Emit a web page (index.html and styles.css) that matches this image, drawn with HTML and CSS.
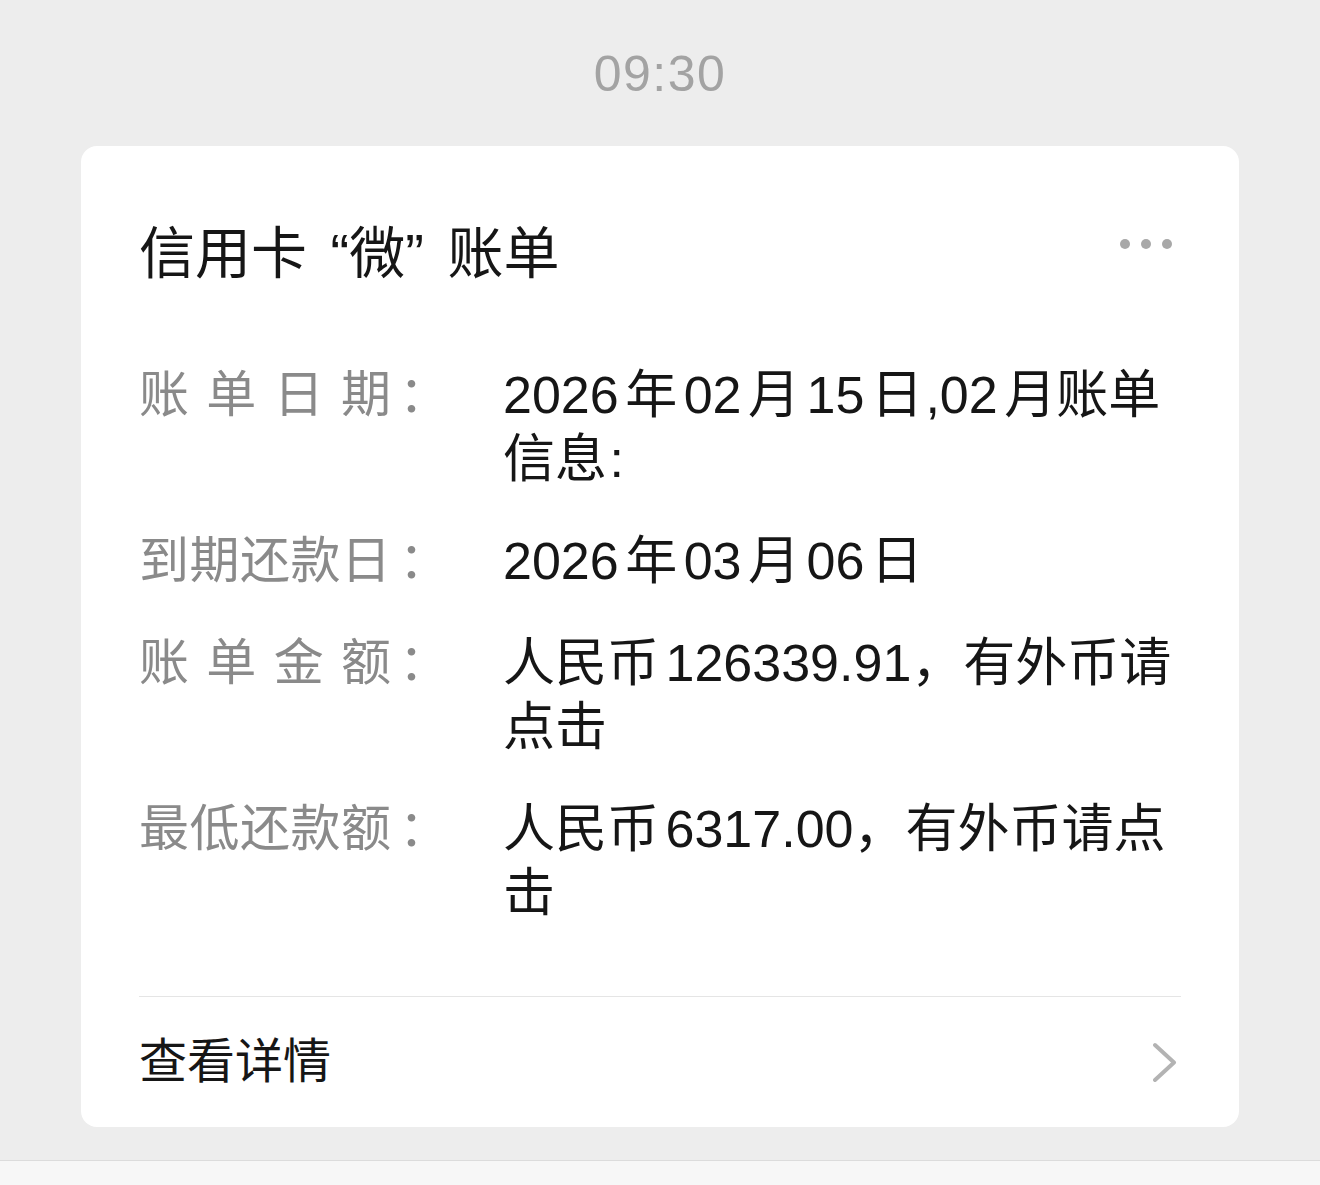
FILE: index.html
```html
<!DOCTYPE html>
<html lang="zh-CN">
<head>
<meta charset="utf-8">
<title>信用卡“微”账单</title>
<link rel="stylesheet" href="styles.css">
</head>
<body>
<div class="time">09:30</div>
<div class="card">
  <div class="head">
    <div class="title">信用卡 “微” 账单</div>
    <div class="more"><i></i><i></i><i></i></div>
  </div>
  <div class="rows">
    <div class="row">
      <div class="label"><span class="lt">账单日期</span><span class="colon">：</span></div>
      <div class="val">2026年02月15<span class="tk">日</span>,02月账单<br>信<span class="tk">息</span>:</div>
    </div>
    <div class="row">
      <div class="label"><span class="lt">到期还款日</span><span class="colon">：</span></div>
      <div class="val">2026年03月06日</div>
    </div>
    <div class="row">
      <div class="label"><span class="lt">账单金额</span><span class="colon">：</span></div>
      <div class="val">人民币126339.91，有外币请<br>点击</div>
    </div>
    <div class="row">
      <div class="label"><span class="lt">最低还款额</span><span class="colon">：</span></div>
      <div class="val">人民币6317.00，有外币请点<br>击</div>
    </div>
  </div>
  <div class="foot">
    <span class="detail">查看详情</span>
    <svg class="chev" width="24" height="40" viewBox="0 0 24 40"><polyline points="2,3 21,20.5 2,38" fill="none" stroke="#b3b3b3" stroke-width="4" stroke-linecap="round" stroke-linejoin="round"/></svg>
  </div>
</div>
<div class="bottombar"></div>
</body>
</html>
```

FILE: styles.css
```css
html, body {
  margin: 0;
  padding: 0;
  overflow: hidden;
}
body {
  background: #ededed;
  font-family: "Liberation Sans", "Noto Sans CJK SC", sans-serif;
  color: #1a1a1a;
  height: 1185px;
}
.time {
  padding-top: 44px;
  height: 60px;
  line-height: 60px;
  text-align: center;
  font-size: 50px;
  letter-spacing: 1.5px;
  color: #a3a3a3;
}
.card {
  margin: 42px 81px 33px 81px;
  background: #fff;
  border-radius: 16px;
  padding: 0 58px 0 58px;
}
.head {
  display: flex;
  justify-content: space-between;
  align-items: flex-start;
  padding-top: 76px;
}
.title {
  font-size: 56px;
  line-height: 64px;
  word-spacing: 8px;
  color: #161616;
}
.more {
  display: flex;
  gap: 11px;
  padding-top: 17px;
  margin-right: 9px;
}
.more i {
  display: block;
  width: 10px;
  height: 10px;
  border-radius: 50%;
  background: #a8a8a8;
}
.rows {
  display: flex;
  flex-direction: column;
  gap: 38px;
  padding: 77px 0 71px 0;
}
.row {
  display: flex;
}
.label {
  flex: 0 0 364px;
  display: flex;
  font-size: 50px;
  line-height: 64px;
  color: #8a8a8a;
}
.lt {
  display: block;
  width: 252px;
  text-align: justify;
  text-align-last: justify;
}
.colon {
  display: block;
  margin-left: 8px;
}
.val {
  font-size: 52px;
  line-height: 64px;
  white-space: nowrap;
  color: #161616;
  text-autospace: normal;
}
.tk {
  letter-spacing: -4px;
}
.foot {
  border-top: 1px solid #e5e5e5;
  height: 130px;
  display: flex;
  align-items: center;
  justify-content: space-between;
}
.detail {
  font-size: 48px;
  line-height: 64px;
  color: #161616;
}
.chev {
  display: block;
  margin-right: 4px;
}
.bottombar {
  border-top: 1px solid #dcdcdc;
  background: #f7f7f7;
  height: 24px;
}
```
